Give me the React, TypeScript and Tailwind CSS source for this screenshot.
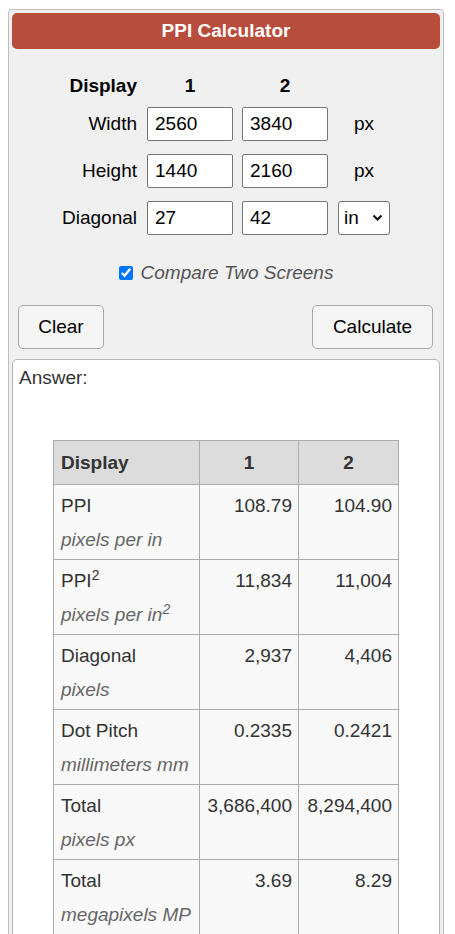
import React from 'react';

const rows = [
  { label: 'PPI', unit: <>pixels per in</>, a: '108.79', b: '104.90', sup: false },
  { label: 'PPI', unit: <>pixels per in<sup className="text-[14px] leading-none">2</sup></>, a: '11,834', b: '11,004', sup: true },
  { label: 'Diagonal', unit: <>pixels</>, a: '2,937', b: '4,406', sup: false },
  { label: 'Dot Pitch', unit: <>millimeters mm</>, a: '0.2335', b: '0.2421', sup: false },
  { label: 'Total', unit: <>pixels px</>, a: '3,686,400', b: '8,294,400', sup: false },
  { label: 'Total', unit: <>megapixels MP</>, a: '3.69', b: '8.29', sup: false },
];

function Field({ value }: { value: string }) {
  return (
    <input
      defaultValue={value}
      className="h-[34px] w-[86px] rounded-[2px] border border-[#767676] bg-white pl-[7px] text-[19px] text-black outline-none"
    />
  );
}

function FormRow({ label, a, b, unit }: { label: string; a: string; b: string; unit: React.ReactNode }) {
  return (
    <div className="flex items-center">
      <div className="w-[125px] text-right">{label}</div>
      <div className="ml-[10px]"><Field value={a} /></div>
      <div className="ml-[9px]"><Field value={b} /></div>
      <div className="ml-[10px] flex w-[52px] justify-center">{unit}</div>
    </div>
  );
}

export default function App() {
  return (
    <div className="min-h-screen bg-white pl-[8px] pt-[9px] text-[19px] text-black" style={{ fontFamily: '"Liberation Sans", Arial, sans-serif' }}>
      <div className="w-[436px] rounded-[4px] border border-[#bdbdbd] bg-[#f0f0f0] p-[3px]">
        <div className="flex h-[36px] items-center justify-center rounded-[5px] bg-[#b84d3c] font-bold text-white">
          PPI Calculator
        </div>

        <div className="mt-[22px] flex h-[30px] items-center font-bold">
          <div className="w-[125px] text-right">Display</div>
          <div className="ml-[10px] w-[86px] text-center">1</div>
          <div className="ml-[9px] w-[86px] text-center">2</div>
        </div>

        <div className="mt-[6px] flex flex-col gap-[13px]">
          <FormRow label="Width" a="2560" b="3840" unit={<span>px</span>} />
          <FormRow label="Height" a="1440" b="2160" unit={<span>px</span>} />
          <FormRow
            label="Diagonal"
            a="27"
            b="42"
            unit={
              <div className="relative h-[34px] w-[52px]">
                <select className="h-full w-full appearance-none rounded-[3px] border border-[#767676] bg-white pl-[5px] text-[19px] outline-none">
                  <option>in</option>
                  <option>cm</option>
                </select>
                <svg className="pointer-events-none absolute right-[7px] top-[13px]" width="11" height="8" viewBox="0 0 11 8">
                  <path d="M1.5 1.5 L5.5 5.5 L9.5 1.5" fill="none" stroke="#111" strokeWidth="2.2" />
                </svg>
              </div>
            }
          />
        </div>

        <div className="mt-[26px] flex h-[24px] items-center justify-center gap-[8px]">
          <input type="checkbox" defaultChecked className="h-[14px] w-[14px] accent-[#0075ff]" />
          <span className="italic text-[#555]">Compare Two Screens</span>
        </div>

        <div className="mt-[20px] flex justify-between px-[6px] pr-[7px]">
          <button className="h-[44px] w-[86px] rounded-[5px] border border-[#a9a9a9] bg-[#f5f5f5]">Clear</button>
          <button className="h-[44px] w-[121px] rounded-[5px] border border-[#a9a9a9] bg-[#f5f5f5]">Calculate</button>
        </div>

        <div className="mt-[10px] w-[428px] rounded-[5px] border border-[#b5b5b5] bg-white px-[6px] pt-[4px] pb-[20px]">
          <div className="leading-[28px] text-[#333]">Answer:</div>
          <table className="mx-auto mt-[48px] border-collapse text-[#333]">
            <thead>
              <tr className="bg-[#dcdcdc]">
                <th className="w-[146px] border border-[#acacac] px-[7px] py-[7px] text-left leading-[29px]">Display</th>
                <th className="w-[99px] border border-[#acacac] px-[7px] py-[7px] text-center leading-[29px]">1</th>
                <th className="w-[100px] border border-[#acacac] px-[7px] py-[7px] text-center leading-[29px]">2</th>
              </tr>
            </thead>
            <tbody>
              {rows.map((r, i) => (
                <tr key={i} className="bg-[#f9f9f9]">
                  <td className="border border-[#acacac] px-[7px] pt-[7px] pb-[5px] align-top leading-[28px]">
                    <div>
                      {r.label}
                      {r.sup && <sup className="text-[14px] leading-none">2</sup>}
                    </div>
                    <div className="mt-[6px] italic text-[#666]">{r.unit}</div>
                  </td>
                  <td className="border border-[#acacac] px-[6px] pt-[7px] text-right align-top leading-[28px]">{r.a}</td>
                  <td className="border border-[#acacac] px-[6px] pt-[7px] text-right align-top leading-[28px]">{r.b}</td>
                </tr>
              ))}
            </tbody>
          </table>
        </div>
      </div>
    </div>
  );
}
